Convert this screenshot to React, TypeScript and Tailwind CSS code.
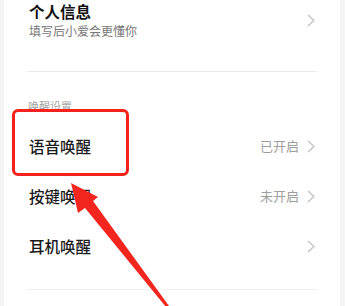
const rows = [
  { label: '语音唤醒', value: '已开启' },
  { label: '按键唤醒', value: '未开启' },
  { label: '耳机唤醒', value: '' },
];

function Chevron() {
  return (
    <svg width="8" height="13" viewBox="0 0 8 13" className="shrink-0">
      <path d="M1 1l6 5.5L1 12" fill="none" stroke="#bdbdbd" strokeWidth="1.1" />
    </svg>
  );
}

export default function App() {
  return (
    <div
      className="relative w-[345px] h-[306px] overflow-hidden bg-[#f5f5f5] pl-[4px] pr-[5px]"
      style={{ fontFamily: '"Noto Sans CJK SC", "Noto Sans", sans-serif' }}
    >
      <div className="h-full bg-white">
        {/* Profile entry */}
        <div className="flex items-center pl-[25px] pr-[25px] pt-[1px]">
          <div className="flex-1">
            <div className="text-[15.5px] leading-[20px] font-semibold text-[#111]">个人信息</div>
            <div className="mt-[2px] text-[12px] leading-[16px] text-[#777]">填写后小爱会更懂你</div>
          </div>
          <Chevron />
        </div>
        <div className="mx-[23px] mt-[32px] h-px bg-[#ebebeb]" />

        {/* Wake-up settings */}
        <div className="mt-[27px] pl-[24px] text-[11px] leading-[14px] text-[#a3a3a3]">唤醒设置</div>
        <div className="mt-[8px]">
          {rows.map((r) => (
            <div key={r.label} className="flex items-center h-[50px] pl-[25px] pr-[25px]">
              <span className="flex-1 text-[15.5px] leading-[20px] font-medium text-[#1a1a1a]">{r.label}</span>
              {r.value && <span className="mr-[8px] text-[13px] leading-[18px] text-[#9e9e9e]">{r.value}</span>}
              <Chevron />
            </div>
          ))}
        </div>
        <div className="mx-[23px] mt-[18px] h-px bg-[#f0f0f0]" />
      </div>

      {/* Annotation: red box + arrow */}
      <div className="absolute left-[12px] top-[109px] w-[117px] h-[67px] rounded-[6px] border-[3.5px] border-[#f5221c]" />
      <svg className="absolute left-0 top-0" width="345" height="306" viewBox="0 0 345 306">
        <polygon
          points="71,183 98,197 93,201 169,306 166,307 85,208 78,213"
          fill="#f2261f"
        />
      </svg>
    </div>
  );
}
